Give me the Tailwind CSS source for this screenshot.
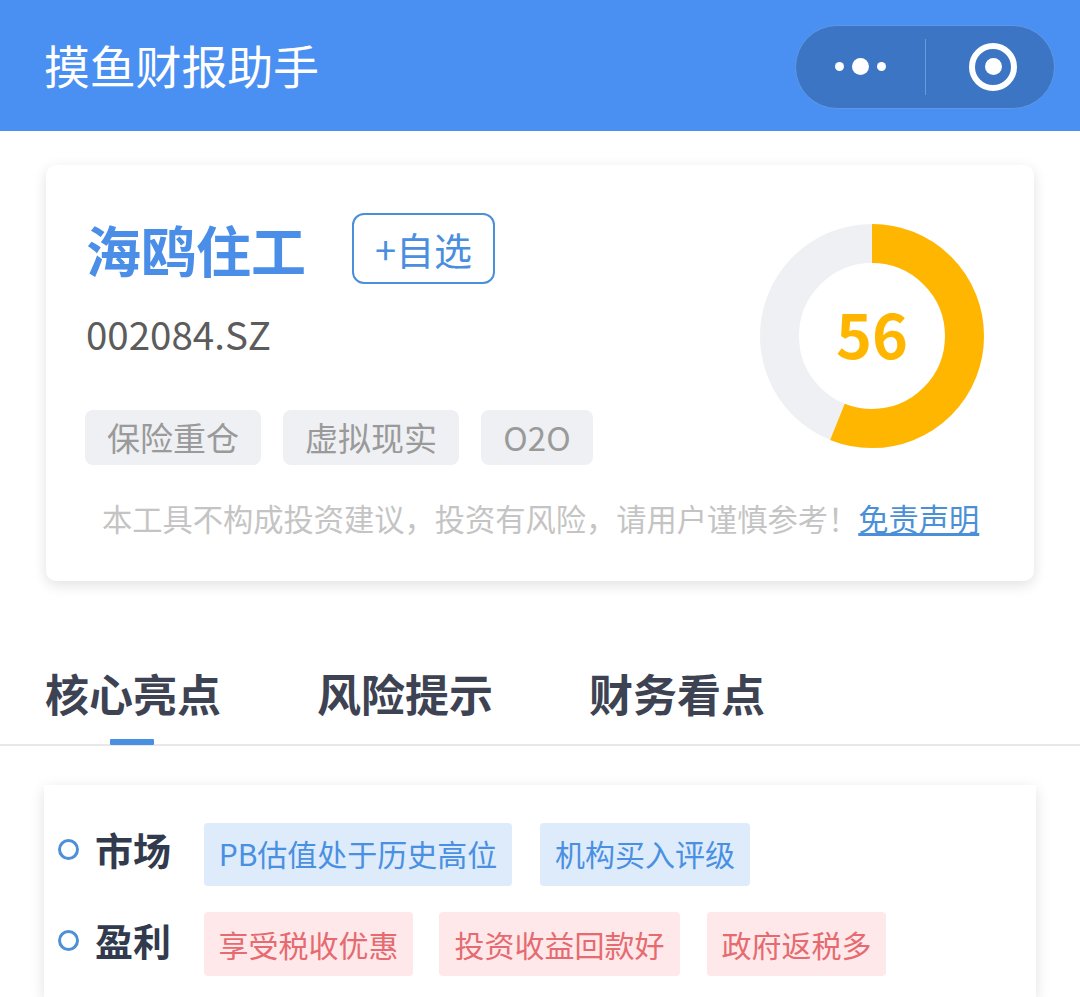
<!DOCTYPE html>
<html lang="zh">
<head>
    <meta charset="UTF-8">
    <title>摸鱼财报助手</title>
    <script src="https://cdn.jsdelivr.net/npm/@tailwindcss/browser@4"></script>
</head>
<body class="bg-white font-['Noto_Sans_CJK_SC','Noto_Sans',sans-serif] w-[1080px] h-[997px] overflow-hidden">
    <!-- Header -->
    <header class="h-[131px] bg-[#4a90f2] flex items-center justify-between pl-[44px] pr-[25px]">
        <div class="text-[46px] leading-none text-white pb-[3px] tracking-[-0.2px]">摸鱼财报助手</div>
        <div class="w-[260px] h-[84px] mt-[2px] rounded-full bg-[#3b75c4] border border-[#5f97e6] flex items-center">
            <div class="w-[129px] flex items-center justify-center gap-[8px]">
                <span class="w-[9px] h-[9px] rounded-full bg-white"></span>
                <span class="w-[17px] h-[17px] rounded-full bg-white"></span>
                <span class="w-[9px] h-[9px] rounded-full bg-white"></span>
            </div>
            <div class="w-px h-[56px] bg-[#6a9bdc]"></div>
            <div class="flex-1 flex items-center justify-center pl-[6px]">
                <div class="w-[48px] h-[48px] rounded-full border-[6px] border-white flex items-center justify-center">
                    <span class="w-[17px] h-[17px] rounded-full bg-white"></span>
                </div>
            </div>
        </div>
    </header>

    <!-- Stock card -->
    <section class="mx-[46px] mt-[34px] w-[988px] h-[416px] bg-white rounded-[10px] shadow-[0_4px_14px_rgba(0,0,0,0.12)] pl-[40px] pr-[50px] pt-[48px]">
        <div class="flex justify-between">
            <div>
                <div class="flex items-center gap-[46px] h-[71px]">
                    <h1 class="text-[55px] leading-none font-bold text-[#4a8ee8]">海鸥住工</h1>
                    <button class="w-[143px] h-[71px] border-[2.5px] border-[#4a90d9] rounded-[12px] text-[38px] leading-none text-[#4a8ee0]">+自选</button>
                </div>
                <div class="mt-[25px] text-[38.5px] leading-[48px] text-[#5c5c5c]">002084.SZ</div>
                <div class="mt-[53px] flex gap-[22px] -ml-px">
                    <span class="w-[176px] h-[55px] rounded-[8px] bg-[#eef0f3] text-[33px] leading-[55px] text-center text-[#9a9a9a]">保险重仓</span>
                    <span class="w-[176px] h-[55px] rounded-[8px] bg-[#eef0f3] text-[33px] leading-[55px] text-center text-[#9a9a9a]">虚拟现实</span>
                    <span class="w-[112px] h-[55px] rounded-[8px] bg-[#eef0f3] text-[33px] leading-[55px] text-center text-[#9a9a9a]">O2O</span>
                </div>
            </div>
            <!-- Score ring -->
            <div class="relative w-[224px] h-[224px] mt-[11px]">
                <svg width="224" height="224" viewBox="0 0 224 224">
                    <circle cx="112" cy="112" r="92.5" fill="none" stroke="#eef0f3" stroke-width="39"/>
                    <circle cx="112" cy="112" r="92.5" fill="none" stroke="#ffb600" stroke-width="39" stroke-dasharray="325.5 581.2" transform="rotate(-90 112 112)"/>
                </svg>
                <div class="absolute inset-0 flex items-center justify-center pb-[8px] text-[61px] font-semibold leading-none text-[#ffb600]">56</div>
            </div>
        </div>
        <p class="mt-[31px] pl-[16px] text-[30.25px] leading-[44px] text-[#c4c4c4] whitespace-nowrap">本工具不构成投资建议，投资有风险，请用户谨慎参考！<a class="text-[#4a90d9] underline">免责声明</a></p>
    </section>

    <!-- Tabs -->
    <nav class="mt-[82px] h-[83px] border-b-2 border-[#e6e8ec] flex pl-[45px] gap-[96px] relative">
        <span class="text-[44px] leading-[60px] font-bold text-[#3d4352]">核心亮点</span>
        <span class="text-[44px] leading-[60px] font-bold text-[#3d4352]">风险提示</span>
        <span class="text-[44px] leading-[60px] font-bold text-[#3d4352]">财务看点</span>
        <span class="absolute left-[110px] bottom-[-1px] w-[44px] h-[6px] bg-[#4a90e2] rounded-[1px]"></span>
    </nav>

    <!-- Highlights -->
    <section class="mx-[44px] mt-[39px] w-[992px] h-[212px] bg-white shadow-[0_4px_14px_rgba(0,0,0,0.12)] pl-[15px] pt-[38px]">
        <div class="flex items-center h-[63px]">
            <div class="flex items-center pb-[11px]">
                <span class="w-[21px] h-[21px] rounded-full border-[3px] border-[#4f8fd8] shrink-0 -ml-px mr-px"></span>
                <span class="ml-[15px] w-[109px] text-[38px] leading-none font-bold text-[#323a4d]">市场</span>
            </div>
            <div class="flex gap-[28px]">
                <span class="w-[308px] h-[63px] rounded-[4px] bg-[#ddebfb] text-[30px] leading-[61px] text-center text-[#4a90e2]">PB估值处于历史高位</span>
                <span class="w-[210px] h-[63px] rounded-[4px] bg-[#ddebfb] text-[30px] leading-[61px] text-center text-[#4a90e2]">机构买入评级</span>
            </div>
        </div>
        <div class="flex items-center h-[64px] mt-[26px]">
            <div class="flex items-center pb-[8px]">
                <span class="w-[21px] h-[21px] rounded-full border-[3px] border-[#4f8fd8] shrink-0 -ml-px mr-px"></span>
                <span class="ml-[15px] w-[109px] text-[38px] leading-none font-bold text-[#323a4d]">盈利</span>
            </div>
            <div class="flex gap-[26px]">
                <span class="w-[209px] h-[64px] rounded-[4px] bg-[#ffe8ea] text-[30px] leading-[64px] text-center text-[#e56b70]">享受税收优惠</span>
                <span class="w-[241px] h-[64px] rounded-[4px] bg-[#ffe8ea] text-[30px] leading-[64px] text-center text-[#e56b70]">投资收益回款好</span>
                <span class="ml-px w-[179px] h-[64px] rounded-[4px] bg-[#ffe8ea] text-[30px] leading-[64px] text-center text-[#e56b70]">政府返税多</span>
            </div>
        </div>
    </section>
</body>
</html>
